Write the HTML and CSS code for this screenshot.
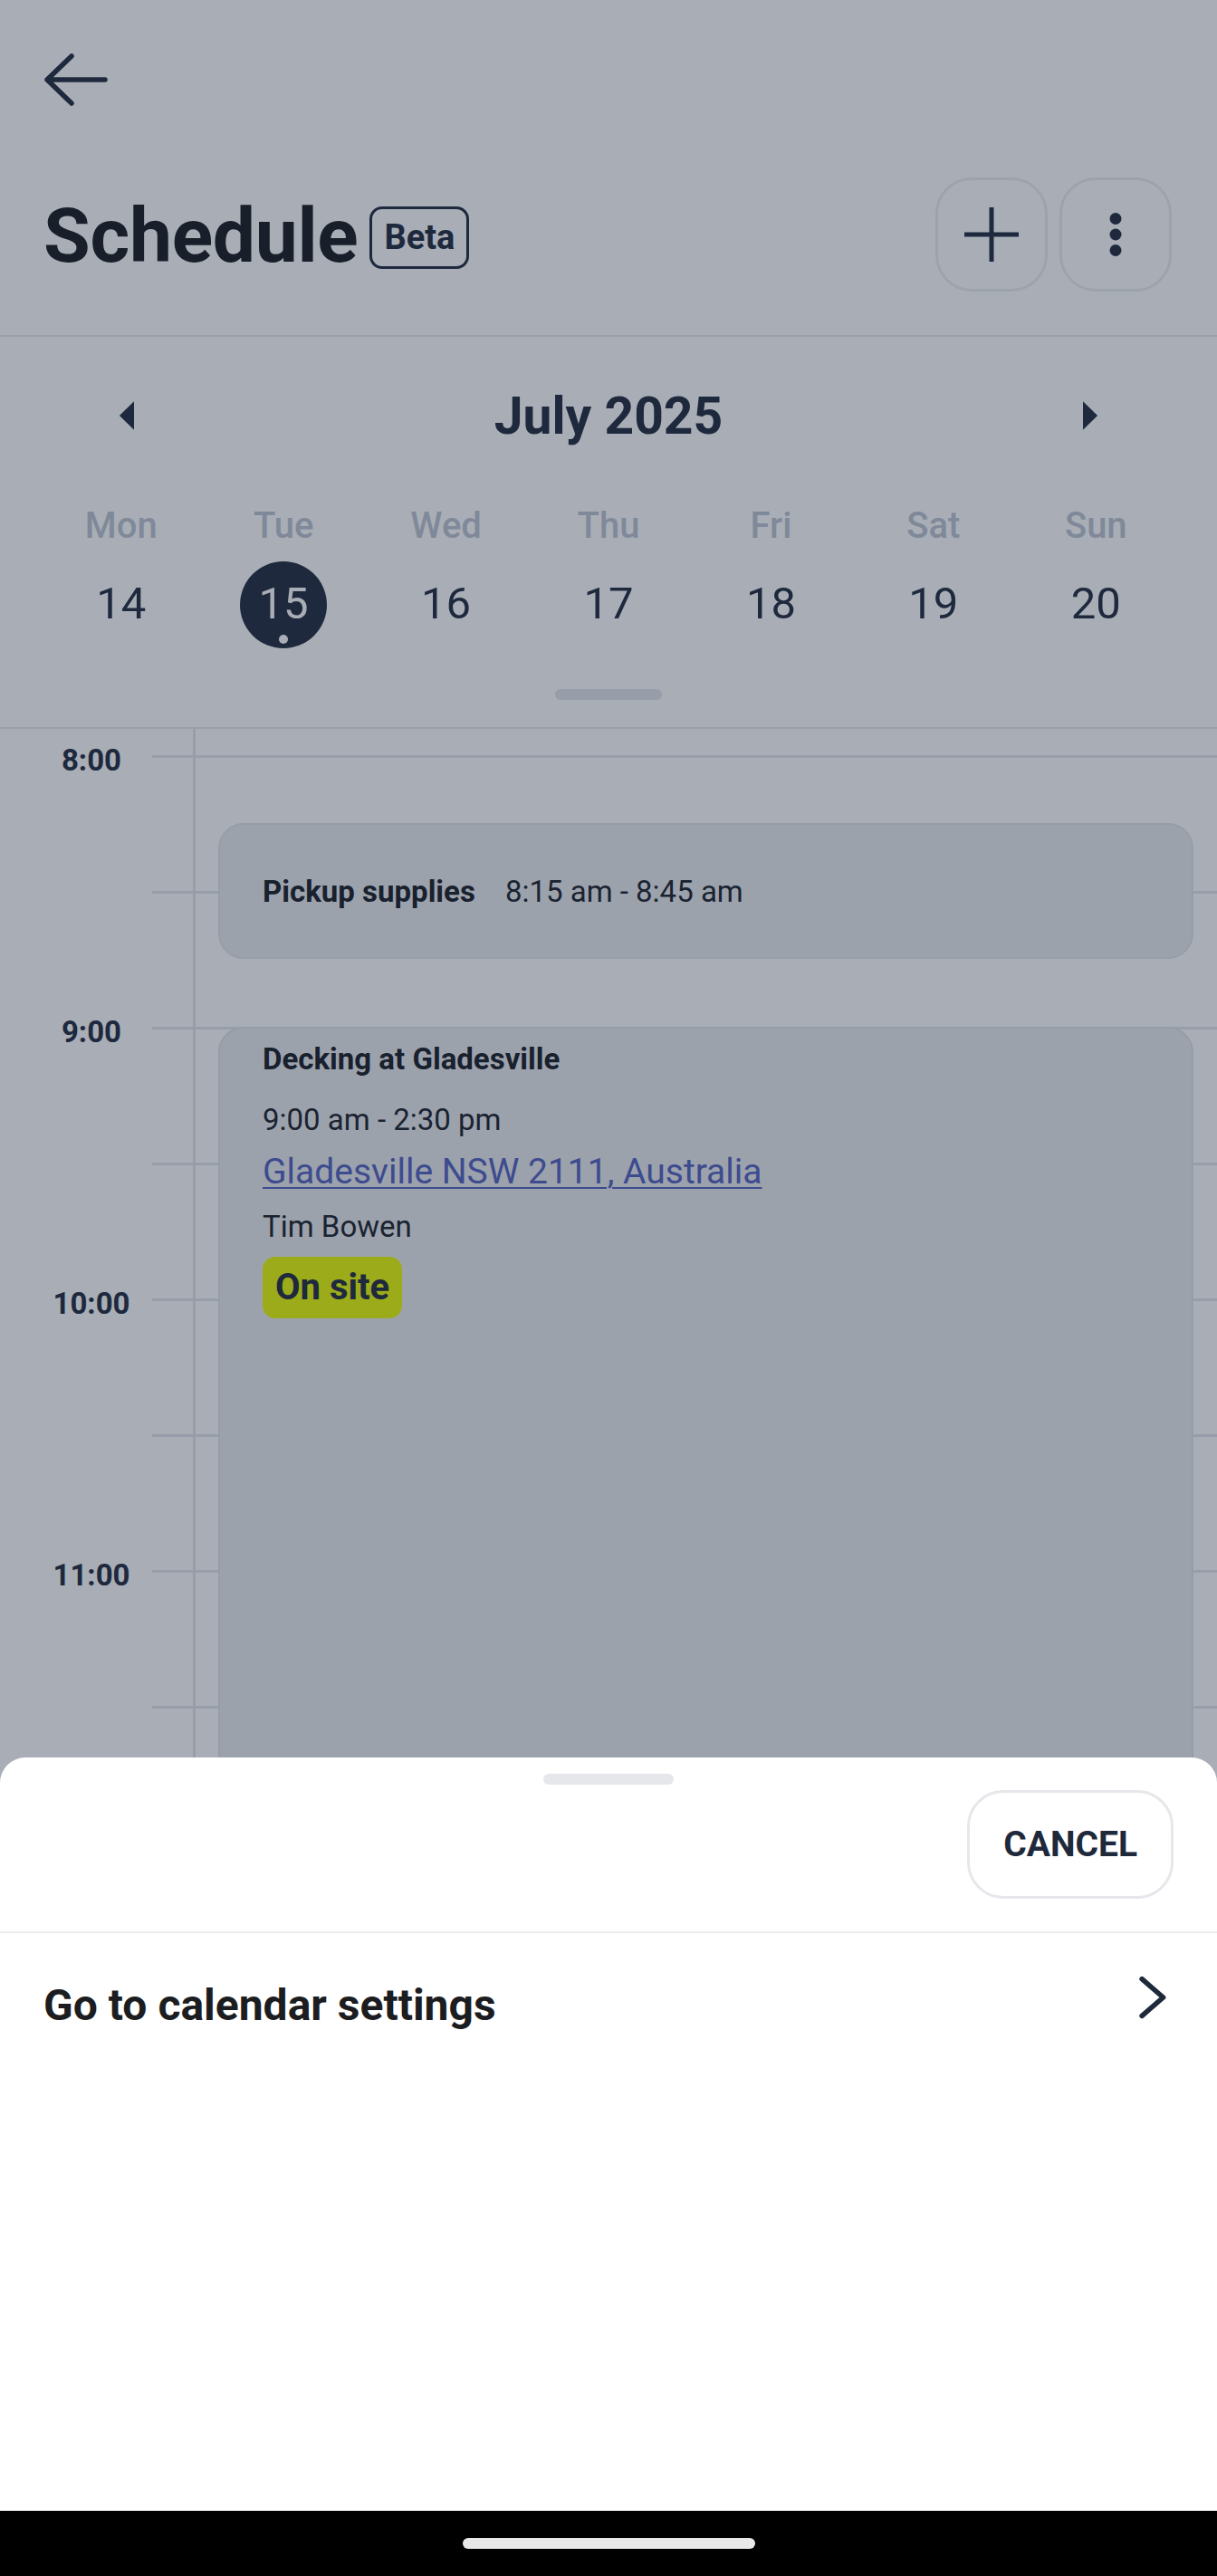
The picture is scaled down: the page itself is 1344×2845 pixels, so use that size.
FILE: index.html
```html
<!DOCTYPE html>
<html lang="en">
<head>
<meta charset="utf-8">
<title>Schedule</title>
<link rel="stylesheet" href="styles.css">
</head>
<body>
<div class="screen">
  <div class="app">
    <header class="header">
      <div class="topbar">
        <button class="back-btn" aria-label="Back">
          <svg width="84" height="84" viewBox="0 0 84 84"><path d="M39 16 L12 42 L39 68 M12 42 H76" fill="none" stroke="#2a3447" stroke-width="5.5" stroke-linecap="round" stroke-linejoin="round"/></svg>
        </button>
      </div>
      <div class="title-row">
        <h1 class="title">Schedule</h1>
        <span class="beta">Beta</span>
        <div class="actions">
          <button class="action-btn" aria-label="Add">
            <svg width="62" height="62" viewBox="0 0 62 62"><path d="M31 1 V61 M1 31 H61" stroke="#2a3447" stroke-width="5"/></svg>
          </button>
          <button class="action-btn" aria-label="More">
            <svg width="20" height="60" viewBox="0 0 20 60"><circle cx="10" cy="12.5" r="6.5" fill="#2a3447"/><circle cx="10" cy="30" r="6.5" fill="#2a3447"/><circle cx="10" cy="47.5" r="6.5" fill="#2a3447"/></svg>
          </button>
        </div>
      </div>
    </header>

    <section class="calendar">
      <div class="month-row">
        <button class="arrow-btn" aria-label="Previous month">
          <svg width="84" height="84" viewBox="0 0 24 24"><path d="M14 7.5l-4.6 4.5 4.6 4.5z" fill="#2a3447"/></svg>
        </button>
        <div class="month">July 2025</div>
        <button class="arrow-btn" aria-label="Next month">
          <svg width="84" height="84" viewBox="0 0 24 24"><path d="M10 16.5l4.6-4.5-4.6-4.5z" fill="#2a3447"/></svg>
        </button>
      </div>
      <div class="week">
        <div class="day"><span class="dname">Mon</span><span class="dnum">14</span></div>
        <div class="day"><span class="dname">Tue</span><span class="dnum selected">15</span></div>
        <div class="day"><span class="dname">Wed</span><span class="dnum">16</span></div>
        <div class="day"><span class="dname">Thu</span><span class="dnum">17</span></div>
        <div class="day"><span class="dname">Fri</span><span class="dnum">18</span></div>
        <div class="day"><span class="dname">Sat</span><span class="dnum">19</span></div>
        <div class="day"><span class="dname">Sun</span><span class="dnum">20</span></div>
      </div>
      <div class="cal-handle"></div>
    </section>

    <section class="timegrid">
      <div class="hour"><span class="hlabel">8:00</span><div class="hslots"></div></div>
      <div class="hour"><span class="hlabel">9:00</span><div class="hslots"></div></div>
      <div class="hour"><span class="hlabel">10:00</span><div class="hslots"></div></div>
      <div class="hour"><span class="hlabel">11:00</span><div class="hslots"></div></div>
      <div class="hour"><span class="hlabel">12:00</span><div class="hslots"></div></div>
      <div class="hour"><span class="hlabel">13:00</span><div class="hslots"></div></div>
      <div class="events">
        <div class="event event-row" style="top:104px;height:150px;">
          <span class="ev-title">Pickup supplies</span>
          <span class="ev-time inline">8:15 am - 8:45 am</span>
        </div>
        <div class="event event-stack" style="top:329px;height:1650px;">
          <span class="ev-title">Decking at Gladesville</span>
          <span class="ev-time">9:00 am - 2:30 pm</span>
          <a class="ev-link" href="#">Gladesville NSW 2111, Australia</a>
          <span class="ev-person">Tim Bowen</span>
          <span class="badge">On site</span>
        </div>
      </div>
    </section>
  </div>

  <div class="scrim"></div>

  <div class="sheet">
    <div class="sheet-handle"></div>
    <div class="sheet-top">
      <button class="cancel">CANCEL</button>
    </div>
    <div class="sheet-item">
      <span class="item-label">Go to calendar settings</span>
      <svg class="chevron" width="84" height="84" viewBox="0 0 24 24"><path d="M8.9 6.2 L15.6 12 L8.9 17.8" fill="none" stroke="#1e293b" stroke-width="1.6" stroke-linecap="round" stroke-linejoin="round"/></svg>
    </div>
  </div>

  <div class="navbar"><div class="nav-handle"></div></div>
</div>
</body>
</html>
```

FILE: styles.css
```css
* { box-sizing: border-box; }

html, body {
  margin: 0;
  padding: 0;
}

body {
  width: 1344px;
  height: 2845px;
  overflow: hidden;
  font-family: Roboto, "Noto Sans", "Liberation Sans", sans-serif;
  background: #000;
}

button {
  font-family: inherit;
  background: transparent;
  border: none;
  padding: 0;
  margin: 0;
  cursor: pointer;
}

.screen {
  position: relative;
  width: 1344px;
  height: 2845px;
  display: flex;
  flex-direction: column;
}

.app {
  height: 2773px;
  overflow: hidden;
  background: #ffffff;
  color: #2a3447;
}

/* Header */
.topbar {
  height: 176px;
  display: flex;
  align-items: center;
  padding-left: 40px;
}

.back-btn {
  width: 84px;
  height: 84px;
  display: flex;
}

.title-row {
  display: flex;
  align-items: center;
  padding: 20px 50px 48px 48px;
  border-bottom: 2px solid #e8e9ec;
}

.title {
  margin: 0;
  padding-top: 3px;
  font-size: 84px;
  line-height: 84px;
  font-weight: 700;
  color: #222428;
  letter-spacing: -0.3px;
}

.beta {
  margin-left: 13px;
  margin-top: 7px;
  border: 3px solid #2a3447;
  border-radius: 14px;
  padding: 0 13px;
  font-size: 38px;
  line-height: 63px;
  font-weight: 700;
  color: #2a3447;
}

.actions {
  margin-left: auto;
  display: flex;
  gap: 13px;
}

.action-btn {
  width: 124px;
  height: 126px;
  border: 3px solid #eceef1;
  border-radius: 40px;
  display: flex;
  align-items: center;
  justify-content: center;
}

/* Calendar */
.calendar {
  padding: 45px 44px 30px;
  border-bottom: 2px solid #e8e9ec;
}

.month-row {
  height: 84px;
  display: flex;
  align-items: center;
  justify-content: space-between;
  padding: 0 55px;
}

.arrow-btn {
  width: 84px;
  height: 84px;
  display: flex;
}

.month {
  font-size: 57px;
  line-height: 57px;
  font-weight: 700;
  color: #2a3447;
}

.week {
  display: grid;
  grid-template-columns: repeat(7, 1fr);
  margin-top: 60px;
}

.day {
  display: flex;
  flex-direction: column;
  align-items: center;
}

.dname {
  font-size: 40px;
  line-height: 40px;
  font-weight: 500;
  color: #c0c7d3;
}

.dnum {
  position: relative;
  margin-top: 19px;
  width: 96px;
  height: 96px;
  border-radius: 50%;
  display: flex;
  align-items: center;
  justify-content: center;
  padding-bottom: 3px;
  font-size: 49px;
  line-height: 49px;
  font-weight: 400;
  color: #2a3447;
}

.dnum.selected {
  background: #2b3445;
  color: #ffffff;
}

.dnum.selected::after {
  content: "";
  position: absolute;
  left: 43px;
  top: 81px;
  width: 10px;
  height: 10px;
  border-radius: 50%;
  background: #ffffff;
}

.cal-handle {
  width: 118px;
  height: 12px;
  border-radius: 6px;
  background: #e5e7eb;
  margin: 45px auto 0;
}

/* Time grid */
.timegrid {
  position: relative;
  padding-top: 29px;
}

.hour {
  display: flex;
  height: 300px;
}

.hlabel {
  width: 168px;
  height: 33px;
  margin-top: -11px;
  padding-left: 34px;
  text-align: center;
  font-size: 33px;
  line-height: 33px;
  font-weight: 700;
  color: #2a3447;
}

.hslots {
  flex: 1;
  border-top: 3px solid #e5e7eb;
}

.hslots::after {
  content: "";
  display: block;
  margin-top: 147px;
  border-top: 3px solid #e5e7eb;
}

.events {
  position: absolute;
  top: 0;
  bottom: 0;
  left: 213px;
  right: 0;
  border-left: 3px solid #e5e7eb;
}

.event {
  position: absolute;
  left: 25px;
  right: 26px;
  background: #ecedf0;
  border: 2px solid #e3e5ea;
  border-radius: 28px;
  padding-left: 47px;
  color: #262a33;
}

.event-row {
  display: flex;
  align-items: center;
}

.event-stack {
  display: flex;
  flex-direction: column;
  align-items: flex-start;
  padding-top: 17px;
}

.ev-title {
  font-size: 33px;
  line-height: 33px;
  font-weight: 700;
  color: #22262e;
}

.ev-time {
  margin-top: 34px;
  font-size: 33px;
  line-height: 33px;
  font-weight: 400;
}

.ev-time.inline {
  margin-top: 0;
  margin-left: 33px;
}

.ev-link {
  margin-top: 22px;
  font-size: 39px;
  line-height: 39px;
  color: #5a67c3;
  text-decoration: underline;
  text-decoration-thickness: 2px;
  text-underline-offset: 4px;
}

.ev-person {
  margin-top: 24px;
  font-size: 33px;
  line-height: 33px;
}

.badge {
  margin-top: 17px;
  padding: 0 14px;
  border-radius: 14px;
  background: #ecfa10;
  font-size: 40px;
  line-height: 68px;
  font-weight: 700;
  color: #2a3447;
}

/* Scrim + sheet */
.scrim {
  position: absolute;
  left: 0;
  right: 0;
  top: 0;
  height: 2773px;
  background: rgba(9, 24, 46, 0.35);
}

.sheet {
  position: absolute;
  left: 0;
  right: 0;
  bottom: 72px;
  height: 832px;
  background: #ffffff;
  border-radius: 28px 28px 0 0;
  display: flex;
  flex-direction: column;
}

.sheet-handle {
  width: 144px;
  height: 12px;
  border-radius: 6px;
  background: #e5e7eb;
  margin: 18px auto 0;
}

.sheet-top {
  display: flex;
  justify-content: flex-end;
  padding: 6px 48px 36px;
  border-bottom: 2px solid #eceef0;
}

.cancel {
  height: 120px;
  padding: 0 37px;
  border: 3px solid #e5e7eb;
  border-radius: 40px;
  background: #ffffff;
  font-size: 39px;
  font-weight: 700;
  color: #1e293b;
}

.sheet-item {
  display: flex;
  align-items: flex-start;
  justify-content: space-between;
  padding: 29px 30px 0 48px;
}

.item-label {
  margin-top: 27px;
  font-size: 48px;
  line-height: 48px;
  font-weight: 700;
  color: #1c1d21;
}

.chevron {
  display: block;
}

.navbar {
  height: 72px;
  background: #000;
  display: flex;
  align-items: center;
  justify-content: center;
}

.nav-handle {
  width: 323px;
  height: 12px;
  border-radius: 6px;
  background: #e8e8e8;
}
```
